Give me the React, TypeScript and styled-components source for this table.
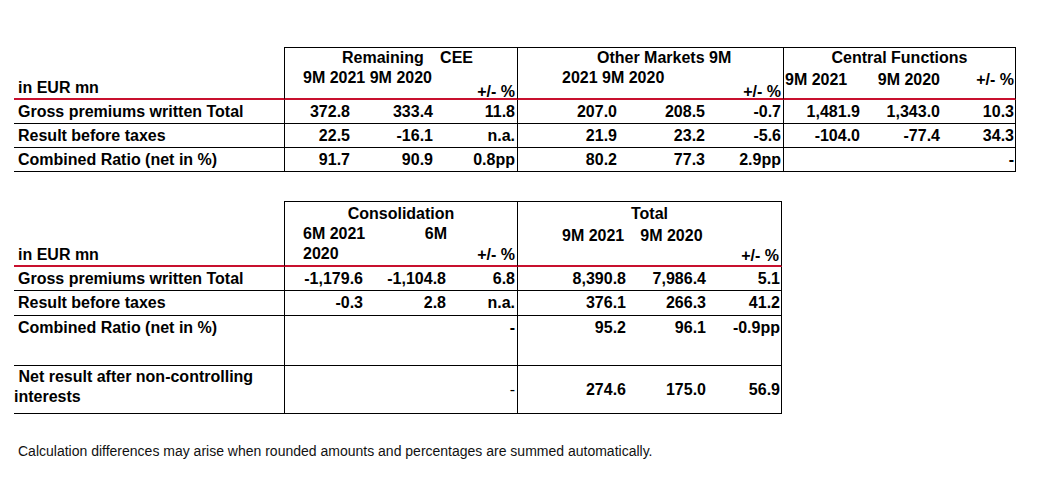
import React from "react";
import styled, { createGlobalStyle, css } from "styled-components";

const RED = "#c8102e";

const GlobalStyle = createGlobalStyle`
  html, body { margin: 0; padding: 0; background: #fff; }
  body { font-family: "Liberation Sans", Arial, sans-serif; color: #000; }
`;

type Cell = string | { text: string; light?: boolean };

type Row = {
  label: string;
  values: Cell[];
  align?: "center" | "top";
  padTop?: number;
  labelPad?: number;
};

const Page = styled.div`
  padding: 47px 0 0 14px;
`;

const Sheet = styled.div<{ $cols: number[]; $rows: number[] }>`
  display: grid;
  grid-template-columns: ${(p) => p.$cols.map((c) => c + "px").join(" ")};
  grid-template-rows: ${(p) => p.$rows.map((r) => r + "px").join(" ")};
  font-size: 16px;
  font-weight: bold;
  & + & {
    margin-top: 29px;
  }
`;

const HeadLabel = styled.div`
  box-sizing: border-box;
  border-bottom: 2px solid ${RED};
  display: flex;
  align-items: flex-end;
  padding-left: 4px;
  line-height: 20px;
`;

const GroupHead = styled.div<{ $last?: boolean; $pt?: number }>`
  box-sizing: border-box;
  grid-column: span 3;
  display: flex;
  flex-direction: column;
  border-top: 1px solid #000;
  border-left: 1px solid #000;
  border-bottom: 2px solid ${RED};
  ${(p) => p.$last && "border-right: 1px solid #000;"}
  padding-top: ${(p) => p.$pt ?? 0}px;
  white-space: nowrap;
`;

const Title = styled.div<{ $offset?: number; $width?: number }>`
  line-height: 20px;
  ${(p) =>
    p.$width
      ? css`
          margin-left: ${p.$offset}px;
          width: ${p.$width}px;
          text-align: justify;
          text-align-last: justify;
        `
      : p.$offset !== undefined
      ? css`
          margin-left: ${p.$offset}px;
        `
      : css`
          text-align: center;
        `}
`;

const Line = styled.div<{ $offset?: number; $width?: number; $gap?: number; $mt?: number }>`
  display: flex;
  justify-content: ${(p) => (p.$gap ? "flex-start" : "space-between")};
  gap: ${(p) => p.$gap ?? 0}px;
  line-height: 20px;
  margin-left: ${(p) => p.$offset ?? 0}px;
  margin-top: ${(p) => p.$mt ?? 0}px;
  ${(p) => p.$width && `width: ${p.$width}px;`}
`;

const Split = styled.div<{ $offset?: number }>`
  flex: 1;
  display: flex;
  justify-content: space-between;
  align-items: flex-start;
  padding-left: ${(p) => p.$offset ?? 0}px;
  padding-right: 2px;
  line-height: 20px;
`;

const Pct = styled.span<{ $lh?: number }>`
  align-self: flex-end;
  margin-left: auto;
  line-height: ${(p) => p.$lh ?? 12}px;
`;

const SubGrid = styled.div`
  display: grid;
  grid-template-columns: 78px 80px 1fr;
  margin-top: 2px;
  line-height: 20px;
`;

const SubCell = styled.span<{ $right?: boolean; $pr?: number }>`
  text-align: ${(p) => (p.$right ? "right" : "left")};
  padding-left: ${(p) => (p.$right ? 0 : 1)}px;
  padding-right: ${(p) => p.$pr ?? 0}px;
`;

const Label = styled.div<{ $top?: boolean; $pt?: number; $pl?: number }>`
  box-sizing: border-box;
  border-bottom: 1px solid #000;
  display: flex;
  align-items: ${(p) => (p.$top ? "flex-start" : "center")};
  padding-top: ${(p) => p.$pt ?? 0}px;
  padding-left: ${(p) => p.$pl ?? 4}px;
  line-height: 20px;
`;

const Value = styled.div<{ $start?: boolean; $end?: boolean; $top?: boolean; $pt?: number; $light?: boolean }>`
  box-sizing: border-box;
  border-bottom: 1px solid #000;
  ${(p) => p.$start && "border-left: 1px solid #000;"}
  ${(p) => p.$end && "border-right: 1px solid #000;"}
  display: flex;
  justify-content: flex-end;
  align-items: ${(p) => (p.$top ? "flex-start" : "center")};
  padding-top: ${(p) => p.$pt ?? 0}px;
  padding-right: ${(p) => (p.$end ? 1 : 2)}px;
  line-height: 20px;
  white-space: nowrap;
  font-weight: ${(p) => (p.$light ? "normal" : "bold")};
`;

const Note = styled.p`
  margin: 29px 0 0 4px;
  font-size: 14px;
  line-height: 16px;
  color: #111;
`;

const segments: Row[] = [
  {
    label: "Gross premiums written Total",
    values: ["372.8", "333.4", "11.8", "207.0", "208.5", "-0.7", "1,481.9", "1,343.0", "10.3"],
  },
  {
    label: "Result before taxes",
    values: ["22.5", "-16.1", "n.a.", "21.9", "23.2", "-5.6", "-104.0", "-77.4", "34.3"],
  },
  {
    label: "Combined Ratio (net in %)",
    values: ["91.7", "90.9", "0.8pp", "80.2", "77.3", "2.9pp", "", "", "-"],
  },
];

const totals: Row[] = [
  {
    label: "Gross premiums written Total",
    values: ["-1,179.6", "-1,104.8", "6.8", "8,390.8", "7,986.4", "5.1"],
  },
  {
    label: "Result before taxes",
    values: ["-0.3", "2.8", "n.a.", "376.1", "266.3", "41.2"],
  },
  {
    label: "Combined Ratio (net in %)",
    values: ["", "", "-", "95.2", "96.1", "-0.9pp"],
    align: "top",
    padTop: 2,
  },
  {
    label: "\u00a0Net result after non-controlling interests",
    values: ["", "", { text: "-", light: true }, "274.6", "175.0", "56.9"],
    labelPad: 0,
  },
];

const BodyRows: React.FC<{ rows: Row[] }> = ({ rows }) => (
  <>
    {rows.map((row) => {
      const top = row.align === "top";
      const labelTop = top || row.labelPad !== undefined;
      return (
        <React.Fragment key={row.label}>
          <Label $top={labelTop} $pt={row.padTop ?? (labelTop ? 1 : 0)} $pl={row.labelPad}>
            {row.label}
          </Label>
          {row.values.map((v, i) => {
            const cell = typeof v === "string" ? { text: v } : v;
            return (
              <Value
                key={i}
                $start={i % 3 === 0}
                $end={i === row.values.length - 1}
                $top={top}
                $pt={top ? row.padTop : 0}
                $light={cell.light}
              >
                {cell.text}
              </Value>
            );
          })}
        </React.Fragment>
      );
    })}
  </>
);

export default function App() {
  return (
    <Page>
      <GlobalStyle />
      <Sheet $cols={[270, 68, 83, 82, 102, 88, 76, 79, 80, 74]} $rows={[53, 24, 24, 24]}>
        <HeadLabel>in EUR mn</HeadLabel>
        <GroupHead>
          <Title $offset={57} $width={131}>Remaining CEE</Title>
          <Split $offset={18}>
            <span>9M 2021 9M 2020</span>
            <Pct>+/- %</Pct>
          </Split>
        </GroupHead>
        <GroupHead>
          <Title $offset={79}>Other Markets 9M</Title>
          <Split $offset={44}>
            <span>2021 9M 2020</span>
            <Pct>+/- %</Pct>
          </Split>
        </GroupHead>
        <GroupHead $last>
          <Title>Central Functions</Title>
          <SubGrid>
            <SubCell>9M 2021</SubCell>
            <SubCell $right $pr={2}>9M 2020</SubCell>
            <SubCell $right $pr={1}>+/- %</SubCell>
          </SubGrid>
        </GroupHead>
        <BodyRows rows={segments} />
      </Sheet>

      <Sheet $cols={[270, 81, 83, 69, 111, 80, 74]} $rows={[66, 24, 25, 50, 48]}>
        <HeadLabel>in EUR mn</HeadLabel>
        <GroupHead $pt={2}>
          <Title>Consolidation</Title>
          <Line $offset={18} $width={144}>
            <span>6M 2021</span>
            <span>6M</span>
          </Line>
          <Split $offset={18}>
            <span>2020</span>
            <Pct $lh={20}>+/- %</Pct>
          </Split>
        </GroupHead>
        <GroupHead $pt={2} $last>
          <Title>Total</Title>
          <Line $offset={44} $gap={16} $mt={2}>
            <span>9M 2021</span>
            <span>9M 2020</span>
          </Line>
          <Split>
            <Pct $lh={20}>+/- %</Pct>
          </Split>
        </GroupHead>
        <BodyRows rows={totals} />
      </Sheet>

      <Note>
        Calculation differences may arise when rounded amounts and percentages are summed automatically.
      </Note>
    </Page>
  );
}
